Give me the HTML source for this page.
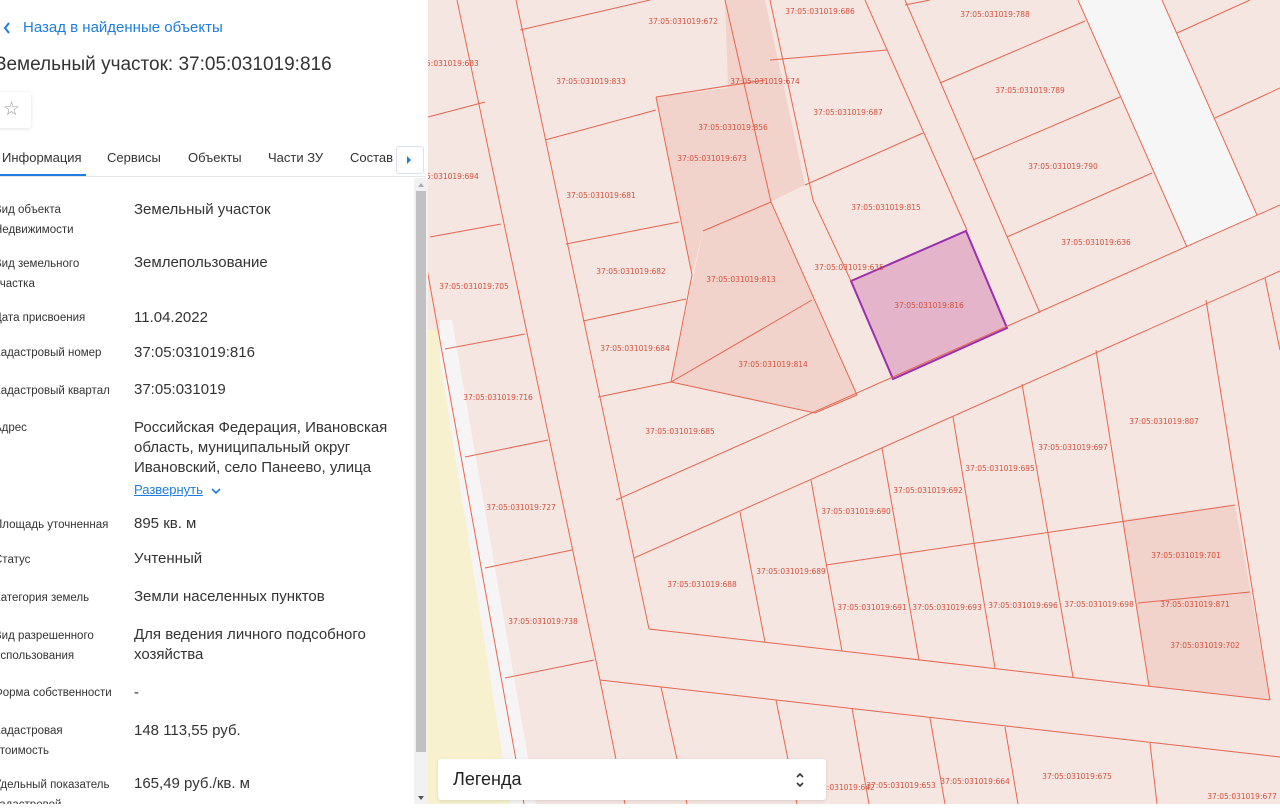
<!DOCTYPE html>
<html><head><meta charset="utf-8">
<style>
*{margin:0;padding:0;box-sizing:border-box}
body{width:1280px;height:804px;overflow:hidden;position:relative;font-family:"Liberation Sans","DejaVu Sans",sans-serif;background:#fff}
#panel{position:absolute;left:0;top:0;width:428px;height:804px;background:#fff;overflow:hidden}
.t{position:absolute;white-space:nowrap;color:#333}
.lb{font-size:11.5px;line-height:20px;left:-6px;color:#333}
.vl{font-size:15px;line-height:20px;left:134px;color:#333}
.tab{position:absolute;top:150px;font-size:13px;color:#333}
#map{position:absolute;left:428px;top:0;width:852px;height:804px;background:#f6e6e2}
#legend{position:absolute;left:438px;top:759px;width:388px;height:41px;background:#fff;border-radius:3px;box-shadow:0 1px 3px rgba(0,0,0,.12)}
</style></head><body>
<div id="map">
<svg width="852" height="804" viewBox="428 0 852 804" xmlns="http://www.w3.org/2000/svg">
<g>
<polygon points="428,330 440,330 524,804 428,804" fill="#f8f1cf"/>
<polygon points="440,320 452,320 536,804 510,804 440,360" fill="#f6f4f4"/>
<polygon points="1078,0 1162,0 1257,215 1187,247" fill="#f6f6f6"/>
<polygon points="656,97 728,88 725,0 765,0 805,185 770,202 703,231 692,275" fill="#f2d3cb"/>
<polygon points="703,231 771,202 857,395 815,413 671,382" fill="#f2d3cb"/>
<polygon points="1122,520 1235,505 1270,700 1150,686" fill="#f2d3cb"/>
<polygon points="851,281 966,231 1007,328 893,379" fill="#e4b4ca" stroke="#9b2fae" stroke-width="2"/>
</g>
<g fill="none" stroke="#e8664f" stroke-width="1">
<line x1="616" y1="500" x2="1280" y2="205"/>
<line x1="634" y1="558" x2="1280" y2="271"/>
<line x1="649" y1="629" x2="1270" y2="700"/>
<line x1="600" y1="680" x2="1280" y2="757"/>
<polyline points="826,565 1235,505"/>
<polyline points="1138,603 1250,592"/>
<line x1="634" y1="558" x2="649" y2="629"/>
<line x1="740" y1="512" x2="765" y2="642"/>
<line x1="811" y1="480" x2="842" y2="651"/>
<line x1="882" y1="448" x2="919" y2="660"/>
<line x1="953" y1="417" x2="995" y2="668"/>
<line x1="1022" y1="384" x2="1073" y2="677"/>
<line x1="1096" y1="350" x2="1149" y2="686"/>
<line x1="1206" y1="300" x2="1270" y2="700"/>
<line x1="1265" y1="278" x2="1280" y2="350"/>
<line x1="661" y1="687" x2="687" y2="804"/>
<line x1="776" y1="700" x2="797" y2="804"/>
<line x1="852" y1="708" x2="869" y2="804"/>
<line x1="930" y1="718" x2="945" y2="804"/>
<line x1="1005" y1="727" x2="1018" y2="804"/>
<line x1="1150" y1="743" x2="1157" y2="804"/>
<line x1="457" y1="0" x2="600" y2="680"/>
<line x1="600" y1="680" x2="625" y2="804"/>
<line x1="516" y1="0" x2="634" y2="558"/>
<line x1="400" y1="120" x2="524" y2="804"/>
<line x1="428" y1="117" x2="485" y2="102"/>
<line x1="430" y1="237" x2="501" y2="224"/>
<line x1="445" y1="349" x2="525" y2="334"/>
<line x1="465" y1="457" x2="548" y2="440"/>
<line x1="485" y1="568" x2="572" y2="550"/>
<line x1="505" y1="678" x2="594" y2="660"/>
<line x1="545" y1="140" x2="656" y2="110"/>
<line x1="566" y1="244" x2="679" y2="222"/>
<line x1="583" y1="321" x2="686" y2="299"/>
<line x1="598" y1="397" x2="671" y2="382"/>
<line x1="520" y1="30" x2="650" y2="0"/>
<polyline points="656,97 692,275 671,382 815,413 857,395"/>
<polyline points="725,0 771,202 857,395"/>
<polyline points="770,0 813,200 851,281"/>
<line x1="703" y1="231" x2="771" y2="202"/>
<line x1="671" y1="382" x2="812" y2="300"/>
<line x1="656" y1="97" x2="765" y2="80"/>
<line x1="865" y1="0" x2="967" y2="230"/>
<line x1="905" y1="0" x2="1040" y2="313"/>
<line x1="1078" y1="0" x2="1187" y2="247"/>
<line x1="1162" y1="0" x2="1257" y2="215"/>
<line x1="770" y1="60" x2="887" y2="50"/>
<line x1="805" y1="185" x2="923" y2="133"/>
<line x1="940" y1="83" x2="1085" y2="21"/>
<line x1="973" y1="160" x2="1120" y2="97"/>
<line x1="1007" y1="237" x2="1152" y2="173"/>
<line x1="1177" y1="33" x2="1250" y2="0"/>
<line x1="1215" y1="118" x2="1280" y2="88"/>
<line x1="905" y1="5" x2="930" y2="0"/>
</g>
<g font-family="DejaVu Sans,sans-serif" font-size="7.5" fill="#d4503c" text-anchor="middle">
<text x="683" y="24">37:05:031019:672</text><text x="820" y="14">37:05:031019:686</text><text x="995" y="17">37:05:031019:788</text>
<text x="444" y="66">37:05:031019:683</text><text x="591" y="84">37:05:031019:833</text><text x="765" y="84">37:05:031019:674</text>
<text x="848" y="115">37:05:031019:687</text><text x="1030" y="93">37:05:031019:789</text><text x="733" y="130">37:05:031019:856</text>
<text x="712" y="161">37:05:031019:673</text><text x="444" y="179">37:05:031019:694</text><text x="1063" y="169">37:05:031019:790</text>
<text x="601" y="198">37:05:031019:681</text><text x="886" y="210">37:05:031019:815</text><text x="1096" y="245">37:05:031019:636</text>
<text x="849" y="270">37:05:031019:635</text><text x="631" y="274">37:05:031019:682</text><text x="741" y="282">37:05:031019:813</text>
<text x="474" y="289">37:05:031019:705</text><text x="929" y="308">37:05:031019:816</text><text x="635" y="351">37:05:031019:684</text>
<text x="773" y="367">37:05:031019:814</text><text x="498" y="400">37:05:031019:716</text><text x="1164" y="424">37:05:031019:807</text>
<text x="680" y="434">37:05:031019:685</text><text x="1073" y="450">37:05:031019:697</text><text x="1000" y="471">37:05:031019:695</text>
<text x="928" y="493">37:05:031019:692</text><text x="521" y="510">37:05:031019:727</text><text x="856" y="514">37:05:031019:690</text>
<text x="1186" y="558">37:05:031019:701</text><text x="702" y="587">37:05:031019:688</text><text x="791" y="574">37:05:031019:689</text>
<text x="872" y="610">37:05:031019:691</text><text x="947" y="610">37:05:031019:693</text><text x="1023" y="608">37:05:031019:696</text>
<text x="1099" y="607">37:05:031019:698</text><text x="1195" y="607">37:05:031019:871</text><text x="543" y="624">37:05:031019:738</text>
<text x="1205" y="648">37:05:031019:702</text><text x="1077" y="779">37:05:031019:675</text><text x="975" y="784">37:05:031019:664</text>
<text x="901" y="788">37:05:031019:653</text><text x="840" y="790">37:05:031019:642</text><text x="1242" y="799">37:05:031019:677</text>
</g>
</svg>
</div>
<div id="legend">
<div class="t" style="left:15px;top:10px;font-size:18px;color:#222">Легенда</div>
<svg style="position:absolute;left:356px;top:12px" width="12" height="18" viewBox="0 0 12 18"><path d="M3 6 L6 3 L9 6 M3 12 L6 15 L9 12" fill="none" stroke="#333" stroke-width="1.6"/></svg>
</div>

<div id="panel">
<svg style="position:absolute;left:2px;top:21px" width="10" height="14" viewBox="0 0 10 14"><path d="M7 2 L3 7 L7 12" fill="none" stroke="#1f7de0" stroke-width="2"/></svg>
<div class="t" style="left:23px;top:19px;font-size:15px;color:#1f7de0">Назад в найденные объекты</div>
<div class="t" style="left:-5px;top:54px;font-size:19px;color:#333">Земельный участок: 37:05:031019:816</div>
<div style="position:absolute;left:-4px;top:92px;width:35px;height:36px;background:#fff;border-radius:3px;box-shadow:0 1px 4px rgba(0,0,0,.12)"></div>
<div class="t" style="left:3px;top:98px;font-size:19px;color:#999">☆</div>
<div class="tab" style="left:2px">Информация</div>
<div class="tab" style="left:107px">Сервисы</div>
<div class="tab" style="left:188px">Объекты</div>
<div class="tab" style="left:268px">Части ЗУ</div>
<div class="tab" style="left:350px">Состав</div>
<div style="position:absolute;left:0;top:174px;width:86px;height:2px;background:#1f7de0"></div>
<div style="position:absolute;left:0;top:176px;width:426px;height:1px;background:#e6e6e6"></div>
<div style="position:absolute;left:396px;top:146px;width:28px;height:28px;border:1px solid #dbe3ee;border-radius:3px;background:#fff"></div>
<svg style="position:absolute;left:406px;top:156px" width="6" height="8"><path d="M1 0 L5 4 L1 8Z" fill="#1f7de0"/></svg>
<div style="position:absolute;left:414px;top:178px;width:14px;height:626px;background:#f1f1f1"></div>
<div style="position:absolute;left:416px;top:191px;width:10px;height:561px;background:#c1c1c1"></div>
<svg style="position:absolute;left:417px;top:182px" width="8" height="6"><path d="M1 5 L4 1 L7 5Z" fill="#aaa"/></svg>
<svg style="position:absolute;left:417px;top:795px" width="8" height="6"><path d="M1 1 L4 5 L7 1Z" fill="#555"/></svg>

<div class="t lb" style="top:200px">Вид объекта</div><div class="t lb" style="top:220px">Недвижимости</div>
<div class="t vl" style="top:200px">Земельный участок</div>
<div class="t lb" style="top:254px">Вид земельного</div><div class="t lb" style="top:274px">участка</div>
<div class="t vl" style="top:253px">Землепользование</div>
<div class="t lb" style="top:308px">Дата присвоения</div><div class="t vl" style="top:308px">11.04.2022</div>
<div class="t lb" style="top:343px">Кадастровый номер</div><div class="t vl" style="top:343px">37:05:031019:816</div>
<div class="t lb" style="top:381px">Кадастровый квартал</div><div class="t vl" style="top:380px">37:05:031019</div>
<div class="t lb" style="top:418px">Адрес</div>
<div class="t vl" style="top:418px">Российская Федерация, Ивановская</div>
<div class="t vl" style="top:438px">область, муниципальный округ</div>
<div class="t vl" style="top:458px">Ивановский, село Панеево, улица</div>
<div class="t" style="left:134px;top:482px;font-size:13px;color:#1f7de0;text-decoration:underline">Развернуть</div>
<svg style="position:absolute;left:211px;top:488px" width="10" height="7"><path d="M1 1 L5 5 L9 1" fill="none" stroke="#1f7de0" stroke-width="1.6"/></svg>
<div class="t lb" style="top:515px">Площадь уточненная</div><div class="t vl" style="top:514px">895 кв. м</div>
<div class="t lb" style="top:550px">Статус</div><div class="t vl" style="top:549px">Учтенный</div>
<div class="t lb" style="top:588px">Категория земель</div><div class="t vl" style="top:587px">Земли населенных пунктов</div>
<div class="t lb" style="top:626px">Вид разрешенного</div><div class="t lb" style="top:646px">использования</div>
<div class="t vl" style="top:625px">Для ведения личного подсобного</div><div class="t vl" style="top:645px">хозяйства</div>
<div class="t lb" style="top:683px">Форма собственности</div><div class="t vl" style="top:683px">-</div>
<div class="t lb" style="top:721px">Кадастровая</div><div class="t lb" style="top:741px">стоимость</div>
<div class="t vl" style="top:721px">148 113,55 руб.</div>
<div class="t lb" style="top:775px">Удельный показатель</div><div class="t lb" style="top:795px">кадастровой</div>
<div class="t vl" style="top:774px">165,49 руб./кв. м</div>
</div>
</body></html>
